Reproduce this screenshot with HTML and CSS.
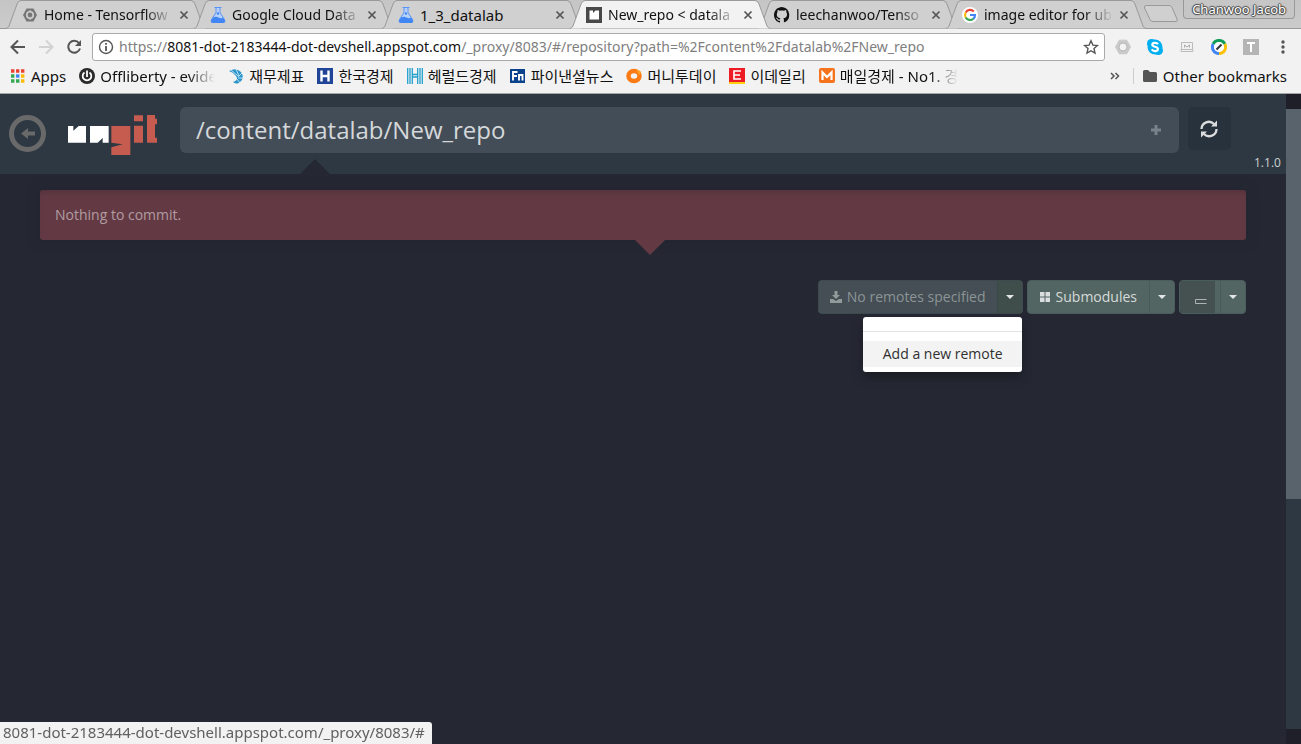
FILE: index.html
```html
<!DOCTYPE html>
<html lang="en">
<head>
<meta charset="utf-8">
<title>New_repo &lt; datalab</title>
<link rel="stylesheet" href="styles.css">
</head>
<body>
<svg class="defs" width="0" height="0" aria-hidden="true">
  <symbol id="tab-shape" viewBox="0 0 200 29" preserveAspectRatio="none">
    <path d="M0 28.500 Q2 28 3 26 L11 4 Q12.500 .5 15 .5 H185 Q187.500 .5 189 4 L197 26 Q198 28 200 28.500" stroke="#999" />
  </symbol>
  <symbol id="cross" viewBox="0 0 10 10"><path d="M1.500 1.500 L8.500 8.500 M8.500 1.500 L1.500 8.500" stroke="#555" stroke-width="1.700"/></symbol>
  <symbol id="flask" viewBox="0 0 16 16"><path d="M4.500 .5 H11.500 M6 .5 V5.500 L1.200 13 Q.6 15.300 2.500 15.300 H13.500 Q15.400 15.300 14.800 13 L10 5.500 V.5" fill="#b9d2fb" stroke="#5a94f6"/><path d="M3 10.500 Q6 9 8.500 10.500 T13 10.500 L15 14 Q15.200 16 13.500 16 H2.500 Q.8 16 1 14Z" fill="#4285f4"/><circle cx="8" cy="6.500" r="1.200" fill="#4285f4"/></symbol>
</svg>

<header class="browser">
  <nav class="tabs" aria-label="Tabs">
    <div class="tab"><svg class="shape"><use href="#tab-shape"/></svg>
      <svg class="ico" viewBox="0 0 16 16"><path d="M4.500 1.500 H11.500 L15 8 L11.500 14.500 H4.500 L1 8Z" fill="#777"/><circle cx="8" cy="8" r="3.200" fill="#777" stroke="#d0d0d0" stroke-width="1.600"/><path d="M8 3v2M8 11v2" stroke="#d0d0d0"/></svg>
      <a class="title" href="#">Home - Tensorflow</a><button class="close" aria-label="Close tab"><svg viewBox="0 0 10 10"><use href="#cross"/></svg></button></div>
    <div class="tab"><svg class="shape"><use href="#tab-shape"/></svg>
      <svg class="ico"><use href="#flask"/></svg>
      <a class="title" href="#">Google Cloud Data</a><button class="close" aria-label="Close tab"><svg viewBox="0 0 10 10"><use href="#cross"/></svg></button></div>
    <div class="tab short"><svg class="shape"><use href="#tab-shape"/></svg>
      <svg class="ico"><use href="#flask"/></svg>
      <a class="title" href="#">1_3_datalab</a><button class="close" aria-label="Close tab"><svg viewBox="0 0 10 10"><use href="#cross"/></svg></button></div>
    <div class="tab active"><svg class="shape"><use href="#tab-shape"/></svg>
      <svg class="ico" viewBox="0 0 16 16"><path d="M0 0H16V16H0Z" fill="#484848"/><path d="M3.500 3.500H7V6L9.500 3.500H13V12.500H3.500Z" fill="#fff"/></svg>
      <a class="title" href="#">New_repo &lt; datala</a><button class="close" aria-label="Close tab"><svg viewBox="0 0 10 10"><use href="#cross"/></svg></button></div>
    <div class="tab"><svg class="shape"><use href="#tab-shape"/></svg>
      <svg class="ico" viewBox="0 0 16 16"><path fill="#111" d="M8 0C3.580 0 0 3.580 0 8c0 3.540 2.290 6.530 5.470 7.590.4.070.55-.17.55-.38v-1.490C4 14.100 3.480 13 3.200 12.500c-.1-.25-.5-.9-.9-1.100-.3-.2-.7-.6 0-.6.600 0 1.100.6 1.200.8.7 1.200 1.900.9 2.400.7.100-.5.300-.9.500-1.100-1.800-.2-3.600-.9-3.600-3.900 0-.9.300-1.600.8-2.200-.1-.2-.4-1 .1-2.100 0 0 .7-.2 2.200.8.600-.2 1.300-.3 2-.3s1.400.1 2 .3c1.500-1 2.200-.8 2.200-.8.400 1.100.2 1.900.1 2.100.5.600.8 1.300.8 2.200 0 3.100-1.900 3.700-3.700 3.900.3.300.6.700.6 1.500v2.200c0 .2.100.5.500.4A8 8 0 0 0 8 0Z"/></svg>
      <a class="title" href="#">leechanwoo/Tenso</a><button class="close" aria-label="Close tab"><svg viewBox="0 0 10 10"><use href="#cross"/></svg></button></div>
    <div class="tab"><svg class="shape"><use href="#tab-shape"/></svg>
      <svg class="ico" viewBox="0 0 16 16"><circle cx="8" cy="8" r="8" fill="#fff"/><g fill="none" stroke-width="2.200"><path d="M11.800 4.600A5 5 0 0 0 3.700 5.500" stroke="#ea4335"/><path d="M3.700 5.500A5 5 0 0 0 3.700 10.500" stroke="#fbbc05"/><path d="M3.700 10.500A5 5 0 0 0 11.300 11.800" stroke="#34a853"/><path d="M11.300 11.800A5 5 0 0 0 13 8H8" stroke="#4285f4"/></g></svg>
      <a class="title" href="#">image editor for ub</a><button class="close" aria-label="Close tab"><svg viewBox="0 0 10 10"><use href="#cross"/></svg></button></div>
    <button class="newtab" aria-label="New tab"><svg viewBox="0 0 36 18"><path d="M3 .5H26Q28 .5 29 2.500L34 14Q35 16.500 33 16.500H10Q8 16.500 7 14.500L1.500 3Q.8.5 3 .5Z" fill="#d0d0d0" stroke="#999"/></svg></button>
    <button class="profile">Chanwoo Jacob</button>
  </nav>

  <div class="toolbar">
    <button class="nav" aria-label="Back"><svg viewBox="0 0 16 16"><path d="M15 8H2M8 1.500L1.500 8L8 14.500" stroke="#555" stroke-width="2"/></svg></button>
    <button class="nav" aria-label="Forward"><svg viewBox="0 0 16 16"><path d="M1 8H14M8 1.500L14.500 8L8 14.500" stroke="#d2d2d2" stroke-width="2"/></svg></button>
    <button class="nav" aria-label="Reload"><svg viewBox="0 0 16 16"><path d="M13 4A6 6 0 1 0 14 9.500" stroke="#555" stroke-width="2"/><path d="M15 1V7H9Z" fill="#555"/></svg></button>
    <div class="omnibox">
      <svg class="info" viewBox="0 0 16 16"><circle cx="8" cy="8" r="6.500" stroke="#555" stroke-width="1.400"/><path d="M8 7V12M8 4V5.800" stroke="#555" stroke-width="1.800"/></svg>
      <a class="url" href="#"><span>https://</span><b>8081-dot-2183444-dot-devshell.appspot.com</b><span>/_proxy/8083/#/repository?path=%2Fcontent%2Fdatalab%2FNew_repo</span></a>
      <button class="star" aria-label="Bookmark"><svg viewBox="0 0 16 16"><path d="M8 1.800L9.900 6.100L14.500 6.500L11 9.600L12 14.100L8 11.700L4 14.100L5 9.600L1.500 6.500L6.100 6.100Z" stroke="#555" stroke-width="1.400"/></svg></button>
    </div>
    <div class="extensions">
      <button aria-label="Extension"><svg viewBox="0 0 16 16"><path d="M4.300 1.200H11.700L15.500 8L11.700 14.800H4.300L.5 8Z" fill="#c9c9c9" stroke="#c9c9c9"/><circle cx="8" cy="8" r="4" fill="#f2f2f2" stroke="#b8b8b8"/></svg></button>
      <button aria-label="Skype"><svg viewBox="0 0 16 16"><circle cx="8" cy="8" r="7.500" fill="#00aff0"/><circle cx="4.600" cy="4.600" r="4.600" fill="#00aff0"/><circle cx="11.400" cy="11.400" r="4.600" fill="#00aff0"/><path d="M11 5.300C9.800 3.300 5.300 3.500 5.300 5.800C5.300 8.400 10.900 7.200 10.900 10C10.900 12.700 6 12.900 4.800 10.300" stroke="#fff" stroke-width="2.200"/></svg></button>
      <button aria-label="Remote desktop"><svg viewBox="0 0 16 16"><path d="M2.500 3.500H13.500V10.500H2.500ZM2 12.500H14V10.500H2Z" stroke="#bbb"/><path d="M5.500 8.500V6L8 8L10.500 6V8.500" stroke="#aaa"/></svg></button>
      <button aria-label="Tag assistant"><svg viewBox="0 0 16 16"><g stroke-width="3"><path d="M2.200 5A6.500 6.500 0 0 1 13.800 5" stroke="#0f9d58"/><path d="M2.200 5A6.500 6.500 0 0 0 8 14.500" stroke="#4285f4"/><path d="M8 14.500A6.500 6.500 0 0 0 13.800 5" stroke="#ffc107"/></g><circle cx="8" cy="8" r="5" fill="#fff"/><path d="M5.500 10.500L10.500 5.500" stroke="#333" stroke-width="2"/></svg></button>
      <button aria-label="Text extension"><svg viewBox="0 0 16 16"><path d="M0 0H16V16H0Z" fill="#b5b5b5"/><path d="M4 4H12M8 4V13" stroke="#fff" stroke-width="2"/></svg></button>
      <button aria-label="Menu"><svg viewBox="0 0 16 16"><g fill="#555"><circle cx="8" cy="3" r="1.700"/><circle cx="8" cy="8" r="1.700"/><circle cx="8" cy="13" r="1.700"/></g></svg></button>
    </div>
  </div>

  <nav class="bookmarks" aria-label="Bookmarks">
    <a href="#"><svg viewBox="0 0 16 16"><path d="M1 1.300H4.400V4.700H1ZM6 1.300H9.400V4.700H6ZM11 1.300H14.400V4.700H11Z" fill="#ea4335"/><path d="M1 6.300H4.400V9.700H1ZM1 11.300H4.400V14.700H1ZM6 11.300H9.400V14.700H6Z" fill="#34a853"/><path d="M6 6.300H9.400V9.700H6Z" fill="#4285f4"/><path d="M11 6.300H14.400V9.700H11ZM11 11.300H14.400V14.700H11Z" fill="#fbbc05"/></svg><span>Apps</span></a>
    <a href="#" class="fade off"><svg viewBox="0 0 16 16"><circle cx="8" cy="8" r="8" fill="#2b2b2b"/><path d="M5.500 4.500A4.300 4.300 0 1 0 10.500 4.500M8 2.500V9" stroke="#fff" stroke-width="1.800"/></svg><span>Offliberty - evide</span></a>
    <a href="#"><svg viewBox="0 0 16 16"><path d="M1 3Q8-1 13 4Q17 10 12 14Q9 17 5 14Q11 12 8 8Q5 4 1 3Z" fill="#2d95c9"/><path d="M3 2L10 8M8 1L11 8M14 5L10 9M15 10L10 10M12 15L9 11" stroke="#d5f0fa" stroke-width=".8"/></svg><span>재무제표</span></a>
    <a href="#"><svg viewBox="0 0 16 16"><path d="M0 0H16V16H0Z" fill="#204497"/><path d="M4.500 2.500V13.500M11.500 2.500V13.500M4 8H12" stroke="#fff" stroke-width="2.400"/></svg><span>한국경제</span></a>
    <a href="#"><svg viewBox="0 0 16 16"><path d="M.7 0V16M3 0V16M5.300 0V16M10.700 0V16M13 0V16M15.300 0V16M5 6.500H11M5 9H11" stroke="#22a0cd" stroke-width="1.300"/></svg><span>헤럴드경제</span></a>
    <a href="#"><svg viewBox="0 0 16 16"><path d="M0 1H15V15H0Z" fill="#0a438c"/><path d="M3 12.500V4H7.500M3 8H7M9 12.500V7H12.500V12.500" stroke="#fff" stroke-width="1.900"/></svg><span>파이낸셜뉴스</span></a>
    <a href="#"><svg viewBox="0 0 16 16"><ellipse cx="8" cy="8" rx="5.500" ry="5" stroke="#fa7a14" stroke-width="4.500"/><path d="M10 1L15.500 4L13 7Z" fill="#ffa127"/></svg><span>머니투데이</span></a>
    <a href="#"><svg viewBox="0 0 16 16"><path d="M0 0H16V14H0Z" fill="#ed1c24"/><path d="M0 14H16V16H0Z" fill="#ffcf12"/><path d="M12 3H5V11H12M5 7H11" stroke="#fff" stroke-width="1.600"/></svg><span>이데일리</span></a>
    <a href="#" class="fade"><svg viewBox="0 0 16 16"><rect width="16" height="15" rx="2" fill="#f4731c"/><path d="M3.500 12V4.500L8 9L12.500 4.500V12" stroke="#fff" stroke-width="2.200"/></svg><span>매일경제 - No1. 경</span></a>
    <button class="more" aria-label="More bookmarks"><svg viewBox="0 0 10 10"><path d="M1 2L4 5L1 8M5.500 2L8.500 5L5.500 8" stroke="#555" stroke-width="1.500"/></svg></button>
    <a href="#" class="other"><svg viewBox="0 0 16 16"><path d="M1 3.500Q1 2 2.500 2H6L8 4H13.500Q15 4 15 5.500V12.500Q15 14 13.500 14H2.500Q1 14 1 12.500Z" fill="#555"/></svg><span>Other bookmarks</span></a>
  </nav>
</header>

<div class="viewport">
  <main class="app">
    <header class="apphead">
      <button class="back" aria-label="Back"><svg viewBox="0 0 37 37"><circle cx="18.500" cy="18.500" r="16" fill="none" stroke="#696969" stroke-width="5"/><path d="M12 18.500L19 13V16.500H26V20.500H19V24Z" fill="#696969"/></svg></button>
      <a class="logo" href="#" aria-label="ungit"><svg viewBox="204 75 267 120"><path fill="#fff" d="M204 108H220V122L236 108H258V158H204ZM270 108H326V158H308V144L293 158H270Z"/><path fill="#c65b50" d="M334 108H391V195H334V172L368 163L334 158ZM402 76H429V94H402ZM402 107H429V158H402ZM441 75H465V86H471V103H465V143H471V158H441Z"/></svg></a>
      <div class="path"><input type="text" aria-label="Repository path" value="/content/datalab/New_repo"><button aria-label="Add"><svg viewBox="0 0 12 12"><path d="M6 1V11M1 6H11" stroke="#78828a" stroke-width="3"/></svg></button></div>
      <button class="refresh" aria-label="Refresh"><svg viewBox="0 0 19 18"><path d="M1.500 9A7.300 7.300 0 0 1 14 4M16.500 9A7.300 7.300 0 0 1 4 14" fill="none" stroke="#dcdddd" stroke-width="2.300"/><path d="M17 .5V6.500H11ZM1 17.500V11.500H7Z" fill="#dcdddd"/></svg></button>
      <span class="version">1.1.0</span>
    </header>
    <section class="content">
      <div class="alert">Nothing to commit.</div>
      <div class="actions">
        <div class="group remotes">
          <button class="muted" disabled><svg viewBox="0 0 12 12"><path d="M4.500 0H7.500V4H10L6 8L2 4H4.500ZM0 8H3L6 10L9 8H12V12H0Z" fill="#929b9c"/></svg>No remotes specified</button>
          <button class="caret open" aria-label="Remotes menu" aria-expanded="true"></button>
          <ul class="menu"><li class="divider"></li><li><a href="#">Add a new remote</a></li></ul>
        </div>
        <div class="group">
          <button class="sub"><svg viewBox="0 0 12 12"><path d="M1 1H5.500V5.500H1ZM6.500 1H11V5.500H6.500ZM1 6.500H5.500V11H1ZM6.500 6.500H11V11H6.500Z" fill="#dadede"/></svg>Submodules</button>
          <button class="caret" aria-label="Submodules menu"></button>
        </div>
        <div class="group">
          <button class="blank" aria-label="Editor"><svg viewBox="0 0 12 6"><path d="M11.500 1.500H.5V5.500H11.500" fill="none" stroke="#adb5b2" stroke-width="1"/></svg></button>
          <button class="caret" aria-label="Editor menu"></button>
        </div>
      </div>
    </section>
  </main>
  <div class="scrollbar" aria-hidden="true"><i class="cap"></i><i class="thumb"></i><i class="track"></i><i class="cap"></i></div>
</div>
<div class="status">8081-dot-2183444-dot-devshell.appspot.com/_proxy/8083/#</div>
</body>
</html>
```

FILE: styles.css
```css
* { box-sizing: border-box; }
body {
  margin: 0;
  height: 100vh;
  display: flex;
  flex-direction: column;
  overflow: hidden;
  background: #252833;
  font: 14px/20px "Open Sans", "Noto Sans", sans-serif;
}
button { border: 0; padding: 0; margin: 0; background: none; font: inherit; color: inherit; display: flex; align-items: center; justify-content: center; }
a { color: inherit; text-decoration: none; }
svg { display: block; flex: none; }
.defs { position: absolute; }

.browser { background: #f2f2f2; border-bottom: 1px solid #a6a6a6; font: 14px/20px "Noto Sans", "Noto Sans CJK KR", sans-serif; color: #111; flex: none; }
.browser svg { fill: none; }
.tabs { display: flex; height: 29px; padding-left: 6px; background: linear-gradient(#c5c5c5, #cbcbcb); border-bottom: 1px solid #999; }
.tab { position: relative; z-index: 1; flex: 0 1 200px; min-width: 0; height: 29px; margin-right: -12px; padding: 0 17px 0 16px; display: flex; align-items: center; }
.tab .shape { position: absolute; inset: 0; width: 100%; height: 29px; z-index: -1; fill: #d0d0d0; }
.tab.active { z-index: 2; }
.tab.active .shape { fill: #f2f2f2; }
.ico { width: 16px; height: 16px; }
.title { flex: 1; min-width: 0; margin: 0 6px; overflow: hidden; white-space: nowrap; -webkit-mask-image: linear-gradient(90deg, #000 78%, transparent); mask-image: linear-gradient(90deg, #000 78%, transparent); }
.short .title { font-size: 15px; -webkit-mask-image: none; mask-image: none; }
.close svg { width: 10px; height: 10px; }
.newtab { margin-left: 9px; width: 36px; }
.newtab svg { width: 36px; height: 18px; }
.profile { margin-left: auto; margin-right: 6px; align-self: flex-start; height: 19px; padding: 0 8px; border: 1px solid #999; border-top: 0; border-radius: 0 0 4px 4px; background: #c6c6c6; color: #fff; font-size: 13px; line-height: 20px; text-shadow: 1px 0 1px #444, -1px 0 1px #444, 0 1px 1px #444, 0 -1px 1px #444; }

.toolbar { display: flex; align-items: center; height: 35px; padding: 0 10px; }
.nav { width: 16px; height: 16px; margin-right: 12px; }
.nav svg, .star svg, .info, .extensions svg, .bookmarks a svg { width: 16px; height: 16px; }
.nav:nth-child(3) { margin-right: 10px; }
.omnibox { flex: 1; min-width: 0; height: 28px; display: flex; align-items: center; gap: 5px; padding: 0 5px; border: 1px solid #aaa; border-radius: 3px; background: #fff; }
.url { flex: 1; overflow: hidden; white-space: nowrap; color: #808080; }
.url b { font-weight: 400; color: #111; }
.extensions { display: flex; gap: 16px; padding-left: 10px; }

.bookmarks { display: flex; align-items: center; height: 29px; padding: 0 14px 5px 10px; gap: 13px; white-space: nowrap; font-size: 15px; }
.bookmarks a { display: flex; align-items: center; gap: 5px; }
.bookmarks .off { width: 136px; }
.fade { -webkit-mask-image: linear-gradient(90deg, #000 80%, transparent); mask-image: linear-gradient(90deg, #000 80%, transparent); }
.more { margin-left: auto; }
.more svg { width: 10px; height: 10px; }
.bookmarks .other { padding-left: 8px; border-left: 1px solid #ccc; height: 16px; }

.viewport { flex: 1; display: flex; min-height: 0; }
.app { flex: 1; min-width: 0; }
.apphead { position: relative; display: flex; align-items: flex-start; height: 80px; padding: 13px 5px 0 9px; background: #2d3843; }
.apphead::after { content: ""; position: absolute; left: 300px; bottom: 0; border: 15px solid transparent; border-top: 0; border-bottom-color: #252833; }
.back { width: 37px; margin-top: 8px; }
.back svg { width: 37px; height: 37px; }
.logo { margin: 8px 23px 0 22px; }
.logo svg { width: 89px; height: 40px; }
.path { flex: 1; display: flex; align-items: center; height: 46px; padding: 0 17px 0 16px; border-radius: 6px; background: #434d57; }
.path input { flex: 1; min-width: 0; border: 0; padding: 0; background: none; color: #d5d8da; font: 24px/32px "Open Sans", sans-serif; outline: 0; }
.path svg { width: 12px; height: 12px; }
.refresh { width: 43px; height: 43px; margin: 0 23px 0 9px; border-radius: 5px; background: #28323c; }
.refresh svg { width: 19px; height: 18px; }
.version { width: 27px; margin-top: 48px; font-size: 12px; line-height: 16px; color: #cdd0d2; }

.content { padding: 16px 40px; }
.alert { position: relative; padding: 15px; border-radius: 3px; background: #633a44; color: #b19ca1; box-shadow: 0 0 12px #22252f, inset 0 6px 6px -4px #53313b; }
.alert::after { content: ""; position: absolute; left: calc(50% - 8px); top: 100%; border: 15px solid transparent; border-bottom: 0; border-top-color: #633a44; }
.actions { display: flex; justify-content: flex-end; gap: 4px; margin-top: 40px; }
.group { position: relative; display: flex; height: 34px; border: 1px solid #4a5d5e; border-radius: 4px; background: #526562; color: #d6dada; }
.group button { padding: 0 11px; gap: 5px; }
.group .sub { padding-right: 12px; }
.group button svg { width: 12px; height: 12px; }
.group .muted { background: #444e54; color: #8c9496; border-radius: 3px 0 0 3px; }
.remotes { border-color: #3d4b4e; }
.group .caret { width: 25px; padding: 0; border-left: 1px solid #485b59; }
.caret::after { content: ""; border: 4px solid transparent; border-top-color: #e4e7e7; border-bottom: 0; }
.group .open { background: #3f4d4b; border-color: #3a4846; }
.group .blank { width: 35px; margin-right: 5px; padding: 8px 0 0 7px; background: #445150; }
.group .blank svg { height: 6px; }
.menu { position: absolute; right: 0; top: 36px; z-index: 5; margin: 0; padding: 5px 0; list-style: none; background: #fff; border-radius: 3px; box-shadow: 0 5px 10px #1a1c24; color: #303030; }
.menu .divider { height: 1px; margin: 9px 0; background: #e3e3e3; }
.menu a { display: block; padding: 3px 19px 3px 20px; background: #f3f3f3; white-space: nowrap; }

.scrollbar { width: 15px; display: flex; flex-direction: column; background: #2d3843; }
.cap { height: 15px; background: #1e1f29; }
.thumb { flex: 39; background: #58636b; }
.track { flex: 23; }
.status { position: fixed; left: 0; bottom: 0; height: 22px; padding: 0 7px 0 3px; border-radius: 0 3px 0 0; background: #f2f2f2; color: #606060; font: 15px/21px "Noto Sans", sans-serif; }
```
